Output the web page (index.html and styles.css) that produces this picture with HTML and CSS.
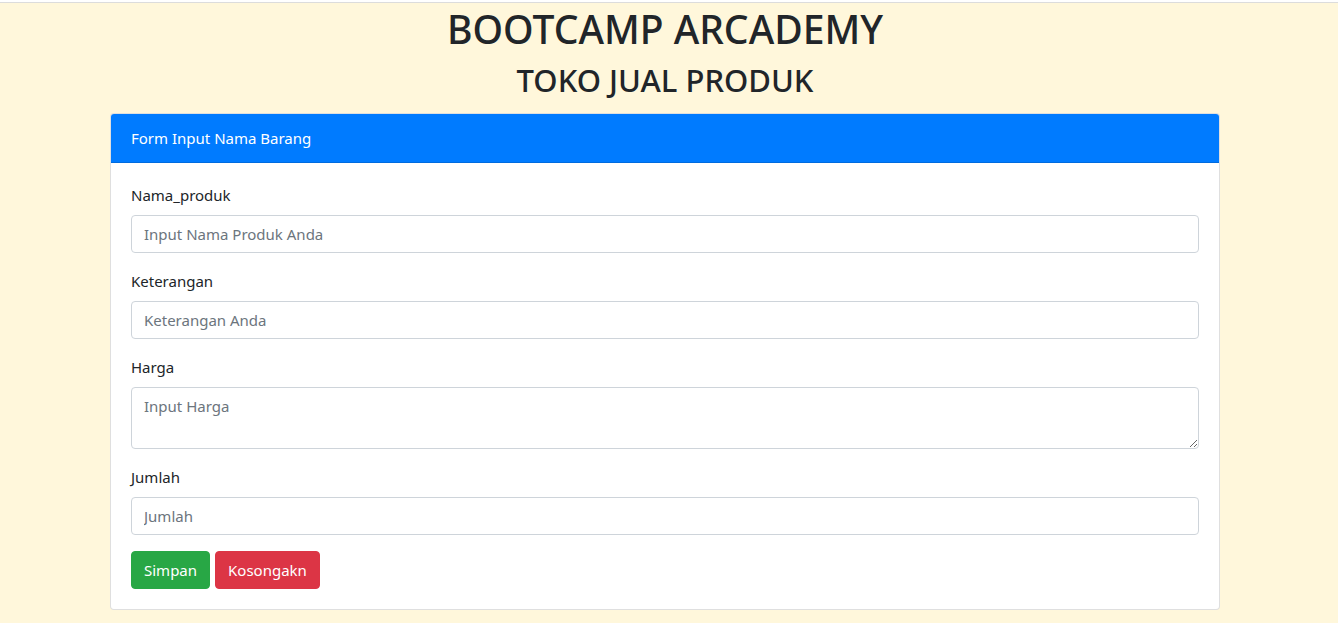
FILE: index.html
```html
<!DOCTYPE html>
<html lang="id">
<head>
<meta charset="utf-8">
<title>Bootcamp Arcademy</title>
<link rel="stylesheet" href="styles.css">
</head>
<body>
<div class="topline"></div>
<div class="page">
  <h1 class="title">BOOTCAMP ARCADEMY</h1>
  <h2 class="subtitle">TOKO JUAL PRODUK</h2>
  <div class="card">
    <div class="card-header">Form Input Nama Barang</div>
    <form class="card-body">
      <div class="form-group">
        <label class="label">Nama_produk</label>
        <input class="control" type="text" placeholder="Input Nama Produk Anda">
      </div>
      <div class="form-group">
        <label class="label">Keterangan</label>
        <input class="control" type="text" placeholder="Keterangan Anda">
      </div>
      <div class="form-group">
        <label class="label">Harga</label>
        <textarea class="control area" rows="2" placeholder="Input Harga"></textarea>
      </div>
      <div class="form-group">
        <label class="label">Jumlah</label>
        <input class="control" type="text" placeholder="Jumlah">
      </div>
      <div class="actions">
        <button type="button" class="btn btn-success">Simpan</button>
        <button type="button" class="btn btn-danger">Kosongakn</button>
      </div>
    </form>
  </div>
</div>
</body>
</html>
```
FILE: styles.css
```css
* { box-sizing: border-box; }
html, body { margin: 0; padding: 0; }
body {
  background: #fff7db;
  font-family: "Segoe UI", "Noto Sans", "Open Sans", sans-serif;
  font-size: 15px;
  line-height: 24px;
  color: #212529;
}
.topline {
  height: 3px;
  background: #ffffff;
  border-bottom: 1px solid #dcdcdc;
}
.page {
  width: 1110px;
  margin-left: 110px;
}
.title {
  margin: 2px 0 8px;
  font-size: 39px;
  font-weight: 500;
  line-height: 48px;
  text-align: center;
}
.subtitle {
  margin: 0 0 14px;
  font-size: 31px;
  font-weight: 500;
  line-height: 38px;
  text-align: center;
}
.card {
  background: #fff;
  border: 1px solid rgba(0,0,0,.125);
  border-radius: 4px;
  overflow: hidden;
}
.card-header {
  background: #007bff;
  color: #fff;
  padding: 12px 20px;
  border-bottom: 1px solid rgba(0,0,0,.125);
}
.card-body {
  padding: 20px;
  margin: 0;
}
.form-group {
  margin-bottom: 16px;
  display: flex;
  flex-direction: column;
}
.label {
  margin-bottom: 8px;
}
.control {
  display: block;
  width: 100%;
  height: 38px;
  padding: 6px 12px;
  font: inherit;
  line-height: 24px;
  color: #495057;
  background: #fff;
  border: 1px solid #ced4da;
  border-radius: 4px;
}
.control::placeholder { color: #6c757d; opacity: 1; }
.area { height: 62px; resize: vertical; }
.actions { display: flex; gap: 5px; }
.btn {
  font: inherit;
  line-height: 24px;
  padding: 6px 12px;
  border: 1px solid transparent;
  border-radius: 4px;
  color: #fff;
}
.btn-success { background: #28a745; border-color: #28a745; }
.btn-danger { background: #dc3545; border-color: #dc3545; }
```
